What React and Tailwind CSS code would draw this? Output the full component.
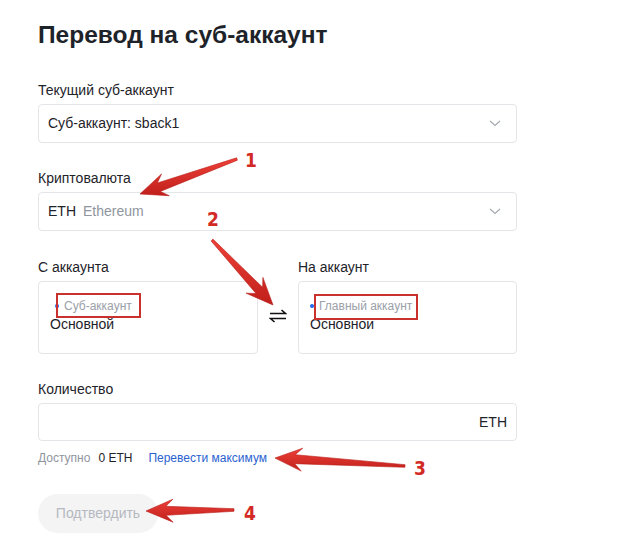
const font = { fontFamily: '"Liberation Sans", Arial, sans-serif' };

const Chevron = () => (
  <svg width="12" height="7" viewBox="0 0 12 7" fill="none">
    <path d="M1 1l5 4.5L11 1" stroke="#a3a8b0" strokeWidth="1.1" />
  </svg>
);

const SwapIcon = () => (
  <svg width="18" height="14" viewBox="0 0 18 14" fill="none">
    <path d="M1 4.5h15.5L12.5 1" stroke="#111" strokeWidth="1.6" />
    <path d="M17 9.5H1.5l4 3.5" stroke="#111" strokeWidth="1.6" />
  </svg>
);

// red annotation arrows drawn on top of the form
const arrowPoints = (x1, y1, x2, y2, hl = 27, hw = 23, sw = 9) => {
  const dx = x2 - x1;
  const dy = y2 - y1;
  const L = Math.hypot(dx, dy);
  const ux = dx / L;
  const uy = dy / L;
  const px = -uy;
  const py = ux;
  const local = [
    [0, -1.3],
    [L - hl + 7, -sw / 2],
    [L - hl, -hw / 2],
    [L, 0],
    [L - hl, hw / 2],
    [L - hl + 7, sw / 2],
    [0, 1.3],
  ];
  return local
    .map(([a, b]) => `${(x1 + ux * a + px * b).toFixed(1)},${(y1 + uy * a + py * b).toFixed(1)}`)
    .join(' ');
};

const arrows = [
  { from: [237, 159], to: [140, 194] },
  { from: [212, 240], to: [273, 305] },
  { from: [405, 466], to: [275, 458] },
  { from: [234, 510], to: [146, 511] },
];

const labels = [
  { n: '1', x: 251, y: 167 },
  { n: '2', x: 213, y: 226 },
  { n: '3', x: 420, y: 475 },
  { n: '4', x: 250, y: 520 },
];

const Annotations = () => (
  <svg className="absolute inset-0 pointer-events-none" width="636" height="538">
    <defs>
      <linearGradient id="red" x1="0" y1="0" x2="0" y2="1">
        <stop offset="0" stopColor="#ee4038" />
        <stop offset="1" stopColor="#c01f1b" />
      </linearGradient>
    </defs>
    {arrows.map((a, i) => (
      <polygon
        key={i}
        points={arrowPoints(a.from[0], a.from[1], a.to[0], a.to[1])}
        fill="url(#red)"
        stroke="#b81c18"
        strokeWidth="0.6"
      />
    ))}
    {labels.map((l) => (
      <text
        key={l.n}
        x={l.x}
        y={l.y}
        textAnchor="middle"
        fontSize="19"
        fontWeight="700"
        fill="#d32a26"
        stroke="#fff"
        strokeWidth="3"
        paintOrder="stroke"
        style={{ fontFamily: '"DejaVu Sans Condensed", "Liberation Sans", sans-serif' }}
      >
        {l.n}
      </text>
    ))}
  </svg>
);

const Label = ({ children }) => (
  <div className="text-[14px] leading-5 text-[#1e2329] mb-1">{children}</div>
);

const AccountBox = ({ tag, boxed, dotIndent }) => (
  <div className="h-[73px] rounded border border-[#e3e5e8] pl-[11px] pt-[16px]">
    <div className="flex items-center h-4 text-[12px] text-[#9aa0a8]">
      <span className={`w-1 h-1 rounded-full bg-[#1f66f0] ${dotIndent ? 'ml-[5px]' : ''}`} />
      <span className="ml-[5px] relative">
        {tag}
        <span className={`absolute border-2 border-[#c8312c] ${boxed}`} />
      </span>
    </div>
    <div className="text-[14px] leading-5 text-[#1e2329]">Основной</div>
  </div>
);

export default function App() {
  return (
    <div className="relative w-[636px] h-[538px] bg-white overflow-hidden" style={font}>
      <div className="pl-[38px] w-[517px] pt-[19px]">
        <h1 className="text-[24.5px] leading-8 font-bold text-[#1e2329]">Перевод на суб-аккаунт</h1>

        <div className="mt-[29px]">
          <Label>Текущий суб-аккаунт</Label>
          <div className="h-[39px] rounded border border-[#e3e5e8] flex items-center justify-between pl-[9px] pr-[15px]">
            <span className="text-[14px] text-[#1e2329]">Суб-аккаунт: sback1</span>
            <Chevron />
          </div>
        </div>

        <div className="mt-[25px]">
          <Label>Криптовалюта</Label>
          <div className="h-[39px] rounded border border-[#e3e5e8] flex items-center justify-between pl-[9px] pr-[15px]">
            <span className="text-[14px]">
              <span className="text-[#1e2329]">ETH</span>
              <span className="ml-[7px] text-[#8f959d]">Ethereum</span>
            </span>
            <Chevron />
          </div>
        </div>

        <div className="mt-[26px] flex items-start">
          <div className="w-[220px]">
            <Label>С аккаунта</Label>
            <AccountBox tag="Суб-аккаунт" boxed="-left-[8px] -right-[9px] -top-[4px] -bottom-[3px]" dotIndent />
          </div>
          <div className="w-[40px] flex justify-center pt-[52px]">
            <SwapIcon />
          </div>
          <div className="w-[219px]">
            <Label>На аккаунт</Label>
            <AccountBox tag="Главный аккаунт" boxed="-left-[5px] -right-[6px] -top-[3px] -bottom-[5px]" />
          </div>
        </div>

        <div className="mt-[25px]">
          <Label>Количество</Label>
          <div className="h-[38px] rounded border border-[#e3e5e8] flex items-center justify-end pr-[9px]">
            <span className="text-[14px] text-[#1e2329]">ETH</span>
          </div>
        </div>

        <div className="mt-[7px] flex items-center h-5 text-[12px]">
          <span className="text-[#8f959d]">Доступно</span>
          <span className="ml-[8px] text-[#1e2329]">0 ETH</span>
          <span className="ml-[16px] text-[#2a62d0]">Перевести максимум</span>
        </div>

        <button className="mt-[26px] h-[39px] w-[120px] rounded-full bg-[#f4f4f5] text-[14px] text-[#b5b9bf]">
          Подтвердить
        </button>
      </div>
      <Annotations />
    </div>
  );
}
